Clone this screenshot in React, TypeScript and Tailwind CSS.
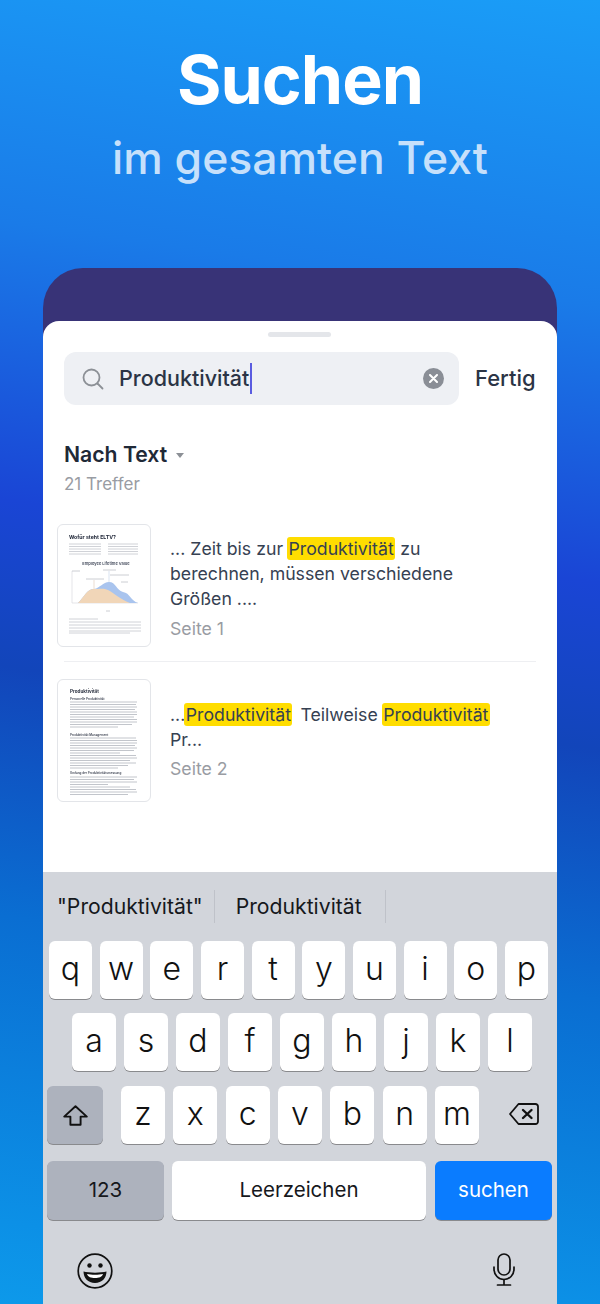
const F = '[font-family:Inter,"Noto_Sans",sans-serif]';

function Key({ k, w = 'w-[43px]' }: { k: string; w?: string }) {
  return (
    <div className={`${w} h-[58px] rounded-[6px] bg-white shadow-[0_1px_0_#898a8d] flex items-center justify-center text-[32px] font-light text-[#111] pb-[3px]`}>
      {k}
    </div>
  );
}

function Highlight({ children }: { children: string }) {
  return <span className="bg-[#ffdd00] rounded-[3px] px-[1.5px] py-[1px]">{children}</span>;
}

function Chart() {
  const labels: [number, number, number][] = [
    [14, 22, 46], [28, 46, 54], [45, 58, 45], [52, 71, 50], [63, 70, 57],
  ];
  return (
    <svg viewBox="0 0 94 123" className="w-[94px] h-[123px] absolute left-0 top-0 blur-[0.3px]">
      <text x="11" y="14" fontSize="5.2" fontWeight="700" fill="#22293a">Wofür steht ELTV?</text>
      {[19, 21.5, 24, 26.5, 29].map((y) => (
        <g key={y}>
          <line x1="11" x2="43" y1={y} y2={y} stroke="#c4c7cd" strokeWidth="0.8" />
          <line x1="50" x2="80" y1={y} y2={y} stroke="#c4c7cd" strokeWidth="0.8" />
        </g>
      ))}
      <text x="48" y="39.5" fontSize="4" fontWeight="600" textAnchor="middle" fill="#444b5c">Employee Lifetime Value</text>
      <line x1="14" x2="14" y1="46" y2="78" stroke="#d3d5da" strokeWidth="0.6" />
      <line x1="14" x2="80" y1="78" y2="78" stroke="#d3d5da" strokeWidth="0.6" />
      <path d="M20 78 C26 72 29 64 36 64 C42 63 45 57 51 57 C58 57 58 65 65 67 C72 68 73 76 80 78 Z" fill="#a9c4ee" />
      <path d="M20 78 C26 72 29 64 36 64 C42 64 46 63 50 65 C56 68 62 74 72 78 Z" fill="#f1d6b8" />
      {labels.map(([a, b, y]) => (
        <line key={a} x1={a} x2={b} y1={y} y2={y} stroke="#bfc2c8" strokeWidth="0.8" />
      ))}
      <line x1="36" x2="36" y1="55" y2="64" stroke="#c9a98a" strokeWidth="0.4" />
      <line x1="51" x2="51" y1="46" y2="57" stroke="#9fb6dc" strokeWidth="0.4" />
      <line x1="48" x2="52" y1="86" y2="86" stroke="#bfc2c8" strokeWidth="0.8" />
      {[94, 97, 100, 103, 106, 108].map((y, i) => (
        <line key={y} x1="11" x2={i === 0 ? 40 : i === 5 ? 72 : 83} y1={y} y2={y} stroke="#c4c7cd" strokeWidth="0.8" />
      ))}
    </svg>
  );
}

function TextPage() {
  const lines = [
    [22, 79], [24.5, 78], [27, 79], [29.5, 77], [32, 79], [34.5, 79], [37, 76], [39.5, 79], [42, 79], [44.5, 74], [47, 60],
    [58, 78], [60.5, 79], [63, 79], [65.5, 77], [68, 79], [70.5, 76], [73, 62], [75.5, 78], [78, 79], [80.5, 72], [83, 78], [85.5, 70], [88, 60],
    [97, 79], [99.5, 76], [102, 79], [104.5, 50], [107, 72], [109.5, 78], [112, 79], [114.5, 70],
  ];
  return (
    <svg viewBox="0 0 94 123" className="w-[94px] h-[123px] absolute left-0 top-0 blur-[0.3px]">
      <text x="12" y="13" fontSize="4.6" fontWeight="700" fill="#2b3140">Produktivität</text>
      <text x="12" y="19.5" fontSize="3" fontWeight="600" fill="#3b4150">Personelle Produktivität</text>
      <text x="12" y="55.5" fontSize="3" fontWeight="600" fill="#3b4150">Produktivität Management</text>
      <text x="12" y="94" fontSize="3" fontWeight="600" fill="#3b4150">Umfang der Produktivitätsmessung</text>
      {lines.map(([y, x2]) => (
        <line key={y} x1="12" x2={x2} y1={y} y2={y} stroke="#c2c5cb" strokeWidth="1" />
      ))}
    </svg>
  );
}

function Thumb({ children }: { children: React.ReactNode }) {
  return (
    <div className="relative w-[94px] h-[123px] shrink-0 rounded-[6px] border border-[#e3e5e9] bg-white overflow-hidden">
      {children}
    </div>
  );
}

export default function App() {
  return (
    <div className={`${F} w-[600px] h-[1304px] overflow-hidden flex flex-col items-center bg-[linear-gradient(188deg,#1a9df7_0%,#1a7be8_22%,#1a45d5_42%,#1245ba_54%,#0a6ed2_72%,#0c90e6_94%,#0d99ea_100%)]`}>
      <h1 className="mt-[41px] text-[68px] leading-[76px] font-bold text-white tracking-[-1px]">Suchen</h1>
      <p className="mt-[11px] text-[44.5px] leading-[60px] font-medium text-[#c6e0fb]">im gesamten Text</p>

      <div className="mt-[80px] w-[514px] flex-1 flex flex-col bg-[#383377] rounded-t-[40px] pt-[53px]">
        <div className="flex-1 flex flex-col bg-white rounded-t-[16px]">
          <div className="self-center mt-[11px] mr-[1px] w-[63px] h-[5px] rounded-full bg-[#e4e6ea]" />
          <div className="mt-[15px] px-[21px] flex items-center">
            <div className="w-[395px] h-[53px] rounded-[12px] bg-[#eef0f4] flex items-center pl-[18px] pr-[15px]">
              <svg width="22" height="22" viewBox="0 0 22 22" fill="none" stroke="#8c9096" strokeWidth="1.8" strokeLinecap="round">
                <circle cx="9.5" cy="9.5" r="8" />
                <path d="M15.5 15.5 L20.5 20.5" />
              </svg>
              <span className="ml-[15px] text-[21.5px] font-medium text-[#2b3445]">Produktivität</span>
              <span className="ml-[1px] w-[2px] h-[31px] bg-[#5a5ce0]" />
              <span className="ml-auto w-[21px] h-[21px] rounded-full bg-[#8a8e96] flex items-center justify-center">
                <svg width="9" height="9" viewBox="0 0 9 9" stroke="#fff" strokeWidth="2" strokeLinecap="round">
                  <path d="M1 1 L8 8 M8 1 L1 8" />
                </svg>
              </span>
            </div>
            <span className="ml-[16px] text-[22px] font-medium text-[#2b3445]">Fertig</span>
          </div>

          <div className="mt-[34px] pl-[21px] flex items-center">
            <span className="text-[21.2px] leading-[30px] font-semibold text-[#1f2937]">Nach Text</span>
            <span className="ml-[9px] mt-[2px] w-0 h-0 border-l-[4px] border-r-[4px] border-t-[5px] border-l-transparent border-r-transparent border-t-[#8c9096]" />
          </div>
          <div className="mt-[3px] pl-[21px] text-[17px] leading-[24px] text-[#999ca3]">21 Treffer</div>

          <div className="mt-[28px] ml-[14px] flex items-start">
            <Thumb><Chart /></Thumb>
            <div className="ml-[19px] mt-[11.5px] w-[300px] text-[17.7px] leading-[25px] text-[#364152]">
              <div>
                ... Zeit bis zur <span className="-ml-[1px]"><Highlight>Produktivität</Highlight></span> zu
                <br />berechnen, müssen verschiedene
                <br />Größen ....
              </div>
              <div className="mt-[5px] text-[#999ca3]">Seite 1</div>
            </div>
          </div>

          <div className="mt-[14px] mx-[21px] h-px bg-[#eeeff2]" />

          <div className="mt-[17px] ml-[14px] flex items-start">
            <Thumb><TextPage /></Thumb>
            <div className="ml-[19px] mt-[22.5px] w-[340px] text-[17.7px] leading-[25px] text-[#364152]">
              <div>
                <span className="-mr-[1px]">...</span><Highlight>Produktivität</Highlight>&nbsp; <span className="-ml-[2px] -mr-[1px]">Teilweise</span> <Highlight>Produktivität</Highlight>
                <br />Pr...
              </div>
              <div className="mt-[4px] text-[#999ca3]">Seite 2</div>
            </div>
          </div>

          <div className="mt-auto h-[432px] bg-[#d2d5db] flex flex-col">
            <div className="h-[69px] flex items-center text-[21.2px] text-[#16181c]">
              <span className="ml-[14px]">"Produktivität"</span>
              <span className="ml-[11px] w-px h-[33px] bg-[#bfc2c9]" />
              <span className="ml-[21px]">Produktivität</span>
              <span className="ml-[23px] w-px h-[33px] bg-[#bfc2c9]" />
            </div>

            <div className="flex flex-col">
              <div className="flex gap-[7.67px] pl-[6px]">
                {'qwertyuiop'.split('').map((k) => <Key key={k} k={k} />)}
              </div>
              <div className="mt-[14px] flex gap-[8px] pl-[29px]">
                {'asdfghjkl'.split('').map((k) => <Key key={k} k={k} w="w-[44px]" />)}
              </div>
              <div className="mt-[15px] flex items-center pl-[4px]">
                <div className="w-[56px] h-[58px] rounded-[6px] bg-[#adb2bd] shadow-[0_1px_0_#898a8d] flex items-center justify-center">
                  <svg width="25" height="21" viewBox="0 0 25 21" fill="none" stroke="#111" strokeWidth="1.9" strokeLinejoin="round">
                    <path d="M12.5 1.2 L23.8 11.6 H17.6 V19.8 H7.4 V11.6 H1.2 Z" />
                  </svg>
                </div>
                <div className="ml-[18px] flex gap-[8.33px]">
                  {'zxcvbnm'.split('').map((k) => <Key key={k} k={k} w="w-[44px]" />)}
                </div>
                <svg className="ml-[30px] mb-[2px]" width="30" height="22" viewBox="0 0 30 22" fill="none" stroke="#111" strokeWidth="1.8" strokeLinejoin="round" strokeLinecap="round">
                  <path d="M9.5 1 H26.5 a2.5 2.5 0 0 1 2.5 2.5 V18.5 a2.5 2.5 0 0 1 -2.5 2.5 H9.5 L1 11 Z" />
                  <path d="M14 7 L22.5 15 M22.5 7 L14 15" strokeWidth="2.4" />
                </svg>
              </div>
              <div className="mt-[17px] flex gap-[8px] pl-[4px]">
                <div className="w-[117px] h-[59px] rounded-[6px] bg-[#adb2bd] shadow-[0_1px_0_#898a8d] flex items-center justify-center text-[20.5px] text-[#16181c]">123</div>
                <div className="w-[254px] h-[59px] rounded-[6px] bg-white shadow-[0_1px_0_#898a8d] flex items-center justify-center text-[20.5px] text-[#16181c]">Leerzeichen</div>
                <div className="ml-[1px] w-[117px] h-[59px] rounded-[6px] bg-[#0a7cff] shadow-[0_1px_0_#898a8d] flex items-center justify-center text-[20.5px] text-white">suchen</div>
              </div>
            </div>

            <div className="mt-[33px] flex items-start justify-between pl-[34px] pr-[42px]">
              <svg width="36" height="36" viewBox="0 0 36 36" fill="none" stroke="#111" strokeWidth="1.7">
                <circle cx="18" cy="18" r="16.8" />
                <circle cx="12.5" cy="12.5" r="2.2" fill="#111" stroke="none" />
                <circle cx="23.5" cy="12.5" r="2.2" fill="#111" stroke="none" />
                <path d="M6.5 18.5 C12 20 24 20 29.5 18.5 C29.5 25 25 30 18 30 C11 30 6.5 25 6.5 18.5 Z" fill="#111" stroke="none" />
                <path d="M10 21 C14 22 22 22 26 21 C25 24 22 25 18 25 C14 25 11 24 10 21 Z" fill="#fff" stroke="none" />
              </svg>
              <svg width="22" height="33" viewBox="0 0 22 33" fill="none" stroke="#111" strokeWidth="1.7" strokeLinecap="round">
                <rect x="5" y="1" width="12" height="21" rx="6" />
                <path d="M1 14 V16 C1 22 5.5 26.5 11 26.5 C16.5 26.5 21 22 21 16 V14" />
                <path d="M11 26.5 V32 M4.5 32 H17.5" />
              </svg>
            </div>
          </div>
        </div>
      </div>
    </div>
  );
}
